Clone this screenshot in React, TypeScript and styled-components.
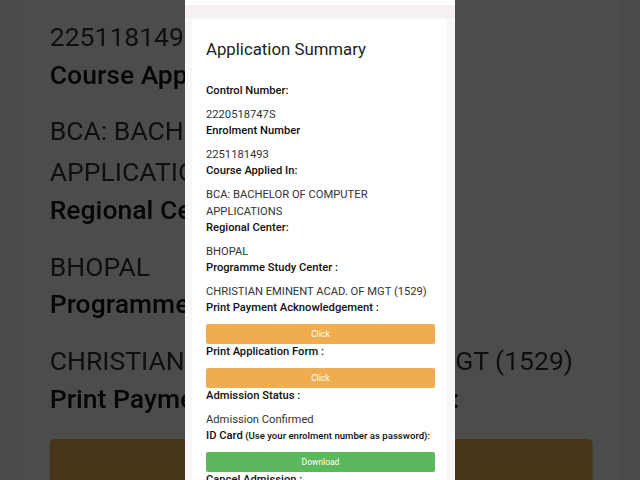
import styled, { createGlobalStyle } from 'styled-components'

const GlobalStyle = createGlobalStyle`
  html, body { margin: 0; padding: 0; }
  body { background: #4b4b4b; font-family: Roboto, "Liberation Sans", Arial, sans-serif; }
`

type Row =
  | { kind: 'text'; label: string; note?: string; value: string }
  | { kind: 'button'; label: string; note?: string; action: string; tone: 'warning' | 'success' }
  | { kind: 'label'; label: string }

const rows: Row[] = [
  { kind: 'text', label: 'Control Number:', value: '2220518747S' },
  { kind: 'text', label: 'Enrolment Number', value: '2251181493' },
  { kind: 'text', label: 'Course Applied In:', value: 'BCA: BACHELOR OF COMPUTER APPLICATIONS' },
  { kind: 'text', label: 'Regional Center:', value: 'BHOPAL' },
  { kind: 'text', label: 'Programme Study Center :', value: 'CHRISTIAN EMINENT ACAD. OF MGT (1529)' },
  { kind: 'button', label: 'Print Payment Acknowledgement :', action: 'Click', tone: 'warning' },
  { kind: 'button', label: 'Print Application Form :', action: 'Click', tone: 'warning' },
  { kind: 'text', label: 'Admission Status :', value: 'Admission Confirmed' },
  {
    kind: 'button',
    label: 'ID Card',
    note: '(Use your enrolment number as password):',
    action: 'Download',
    tone: 'success',
  },
  { kind: 'label', label: 'Cancel Admission :' },
]

const Summary = () => (
  <Panel>
    <TopBar />
    <Card>
      <Title>Application Summary</Title>
      {rows.map((row, idx) => (
        <Field key={idx}>
          <Label>
            {row.label}
            {'note' in row && row.note && <Note> {row.note}</Note>}
          </Label>
          {row.kind === 'text' && <Value>{row.value}</Value>}
          {row.kind === 'button' && <ActionButton $tone={row.tone}>{row.action}</ActionButton>}
        </Field>
      ))}
    </Card>
  </Panel>
)

const App = () => (
  <>
    <GlobalStyle />
    <Stage>
      <Backdrop aria-hidden>
        <Summary />
      </Backdrop>
      <Front>
        <Summary />
      </Front>
    </Stage>
  </>
)

export default App

const Stage = styled.div`
  position: relative;
  width: 640px;
  height: 480px;
  overflow: hidden;
  background: #4b4b4b;
`

const Backdrop = styled.div`
  position: absolute;
  inset: 0;
  display: flex;
  justify-content: center;
  filter: brightness(0.3) blur(0.6px);
  & > * {
    transform: scale(2.3704);
    transform-origin: 50% 50%;
  }
`

const Front = styled.div`
  position: relative;
  display: flex;
  justify-content: center;
  height: 480px;
`

const Panel = styled.div`
  width: 270px;
  height: 480px;
  overflow: hidden;
  background: #f7f7f7;
  display: flex;
  flex-direction: column;
`

const TopBar = styled.div`
  height: 13px;
  flex: none;
  border-top: 5px solid #fdfdfd;
  background: #f6f0f5;
  margin-bottom: 1px;
`

const Card = styled.div`
  flex: 1;
  margin: 0 8px 0 7px;
  padding: 20px 12px 0 14px;
  background: #fff;
`

const Title = styled.h2`
  margin: 0 0 24px;
  font-size: 16.8px;
  line-height: 20px;
  font-weight: 400;
  color: #222;
`

const Field = styled.div`
  display: flex;
  flex-direction: column;
`

const Label = styled.div`
  font-family: "Roboto Medium", Roboto, "Liberation Sans", sans-serif;
  font-size: 11.2px;
  line-height: 16px;
  font-weight: 500;
  color: #111;
  white-space: nowrap;
`

const Note = styled.span`
  font-size: 9.6px;
`

const Value = styled.div`
  margin-top: 7px;
  font-size: 11.2px;
  line-height: 17px;
  color: #333;
`

const ActionButton = styled.div<{ $tone: 'warning' | 'success' }>`
  margin-top: 8px;
  height: 20px;
  border-radius: 2px;
  background: ${({ $tone }) => ($tone === 'warning' ? '#f0ad4e' : '#5cb85c')};
  color: #fff;
  font-size: 8.5px;
  line-height: 20px;
  text-align: center;
`
